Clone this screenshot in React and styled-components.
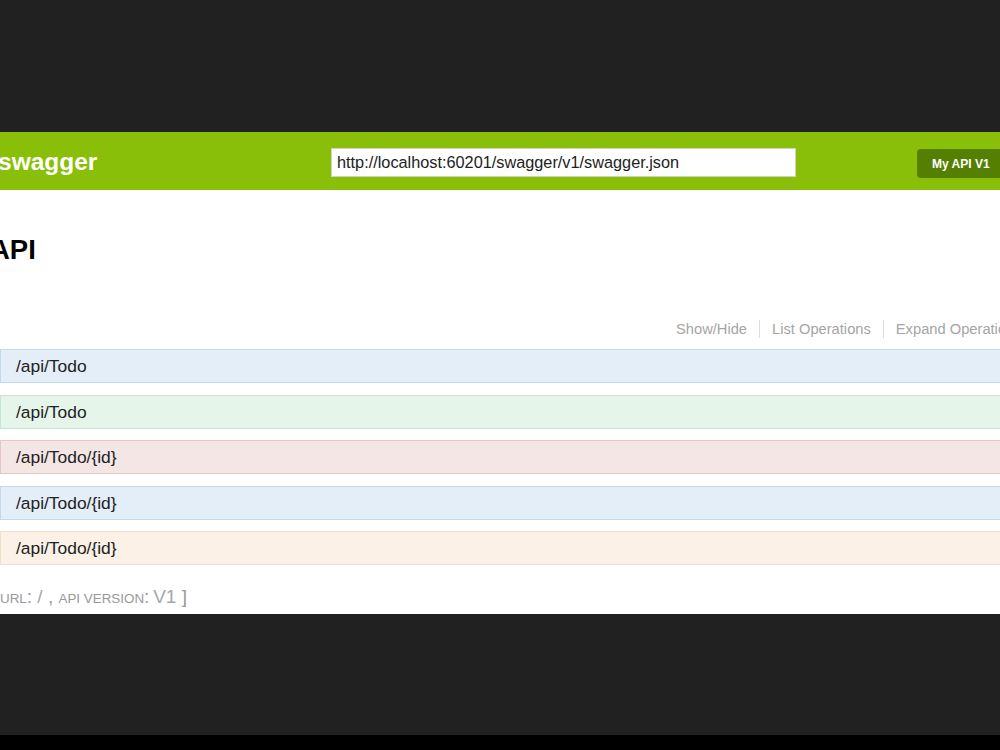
import React from "react";
import styled, { createGlobalStyle } from "styled-components";

const GlobalStyle = createGlobalStyle`
  html, body {
    margin: 0;
    padding: 0;
    background: #212121;
    overflow: hidden;
  }
  body {
    font-family: "Liberation Sans", Arial, sans-serif;
  }
`;

const endpoints = [
  { method: "get", path: "/api/Todo" },
  { method: "post", path: "/api/Todo" },
  { method: "delete", path: "/api/Todo/{id}" },
  { method: "get", path: "/api/Todo/{id}" },
  { method: "put", path: "/api/Todo/{id}" },
];

const methodColors = {
  get: { bg: "#e4eef8", border: "#c3d9ec" },
  post: { bg: "#e5f5ea", border: "#c3e8d1" },
  delete: { bg: "#f5e6e6", border: "#e8c6c7" },
  put: { bg: "#fbf1e6", border: "#f0e0ca" },
};

const App = () => {
  return (
    <Screen>
      <GlobalStyle />
      <TopShade />
      <Panel>
        <Header>
          <Logo>swagger</Logo>
          <UrlInput readOnly value="http://localhost:60201/swagger/v1/swagger.json" />
          <ExploreButton>My API V1</ExploreButton>
        </Header>
        <Content>
          <Title>API</Title>
          <Options>
            <Option>Show/Hide</Option>
            <Option>List Operations</Option>
            <Option>Expand Operations</Option>
          </Options>
          <Endpoints>
            {endpoints.map((e, i) => (
              <Endpoint key={i} method={e.method}>
                {e.path}
              </Endpoint>
            ))}
          </Endpoints>
          <Footer>
            [ <Caps>base url</Caps>: <Value>/</Value> , <Caps>api version</Caps>:
            <Value>&thinsp;V1</Value> ]
          </Footer>
        </Content>
      </Panel>
      <BottomShade />
      <Letterbox />
    </Screen>
  );
};

const Screen = styled.div`
  width: 1000px;
  height: 750px;
  display: flex;
  flex-direction: column;
  overflow: hidden;
`;

const TopShade = styled.div`
  height: 132px;
  flex: none;
  background: #212121;
`;

const BottomShade = styled.div`
  height: 121px;
  flex: none;
  background: #212121;
`;

const Letterbox = styled.div`
  flex: 1;
  background: #000;
`;

const Panel = styled.div`
  flex: none;
  height: 482px;
  background: #fff;
  overflow: hidden;
`;

const Header = styled.div`
  height: 58px;
  background: #89bf08;
  display: flex;
  align-items: center;
`;

const Logo = styled.div`
  width: 333px;
  margin-left: -2px;
  margin-top: 2px;
  flex: none;
  color: #fff;
  font-size: 24.5px;
  font-weight: bold;
`;

const UrlInput = styled.input`
  box-sizing: border-box;
  width: 465px;
  height: 29px;
  flex: none;
  margin: 3px 0 0;
  padding: 0 5px;
  border: 1px solid #cfd3c4;
  background: #fff;
  color: #222;
  font-family: "Liberation Sans", Arial, sans-serif;
  font-size: 16.3px;
  outline: none;
`;

const ExploreButton = styled.div`
  flex: none;
  margin-left: 121px;
  margin-top: 5px;
  height: 29px;
  width: 110px;
  padding-left: 15px;
  display: flex;
  align-items: center;
  background: #547f00;
  border-radius: 4px;
  color: #fff;
  font-size: 12px;
  font-weight: bold;
`;

const Content = styled.div`
  display: flex;
  flex-direction: column;
`;

const Title = styled.h2`
  margin: 44px 0 0 -10px;
  font-size: 27.5px;
  line-height: 32px;
  font-weight: bold;
  color: #000;
`;

const Options = styled.ul`
  list-style: none;
  margin: 54px 0 0 664px;
  padding: 0;
  display: flex;
  white-space: nowrap;
`;

const Option = styled.li`
  padding: 0 12px;
  font-size: 14.7px;
  line-height: 18px;
  color: #a5a5a5;
  & + & {
    border-left: 1px solid #dddddd;
  }
`;

const Endpoints = styled.div`
  margin-top: 11px;
  display: flex;
  flex-direction: column;
  gap: 11.5px;
`;

const Endpoint = styled.div`
  box-sizing: border-box;
  height: 34px;
  margin-right: -20px;
  padding-left: 15px;
  border: 1px solid ${(p) => methodColors[p.method].border};
  background: ${(p) => methodColors[p.method].bg};
  color: #222;
  font-size: 17.4px;
  line-height: 32px;
`;

const Footer = styled.h4`
  margin: 21px 0 0 -50px;
  height: 22px;
  font-size: 19px;
  line-height: 22px;
  font-weight: normal;
  color: #999;
  white-space: nowrap;
`;

const Caps = styled.span`
  text-transform: uppercase;
  font-size: 13.4px;
  line-height: 1;
`;

const Value = styled.span`
  color: #a3a8ad;
`;

export default App;
